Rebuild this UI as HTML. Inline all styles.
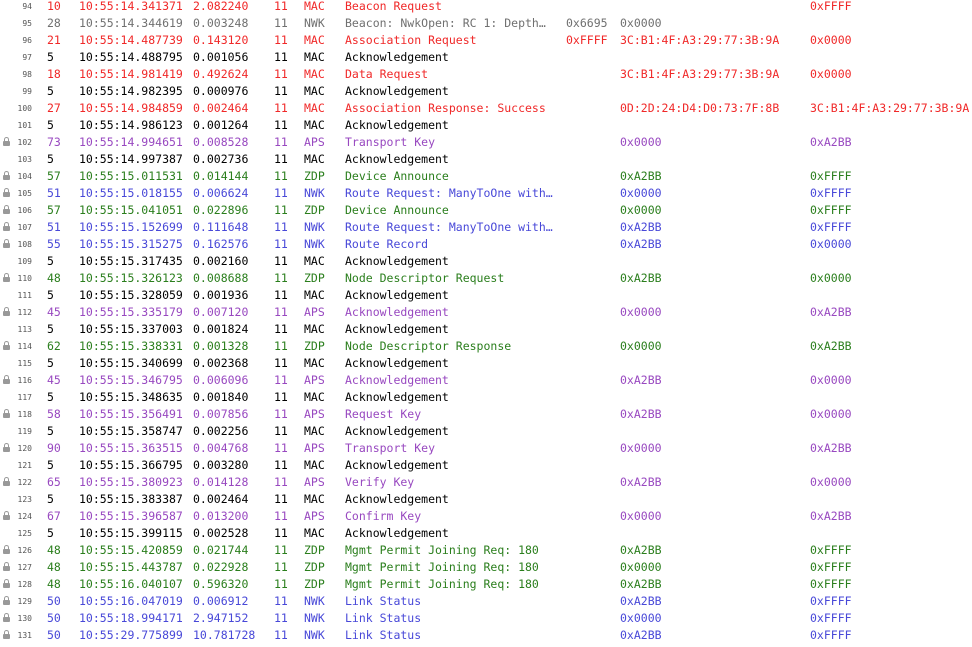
<!DOCTYPE html>
<html><head><meta charset="utf-8"><style>
body{margin:0;background:#fff;width:972px;height:647px;overflow:hidden;font-family:"DejaVu Sans Mono","Liberation Mono",monospace;font-size:11.5px}
#t{position:absolute;top:-2px;left:0}
.r{position:relative;height:17px;line-height:17px;white-space:nowrap;color:#000}
.r span{position:absolute;top:0}
.i{left:0;width:32px;text-align:right;font-size:8px;color:#555}
.n{left:47px}.t{left:79px}.d{left:193px}.c{left:274px}.p{left:304px}.s{left:345px}.a{left:566px}.b{left:620px}.e{left:810px}
.R{color:#f02828}.G{color:#707070}.P{color:#9848c0}.V{color:#2a7e1c}.B{color:#4848d8}
.L::before{content:"";position:absolute;left:3px;top:7px;width:7px;height:5px;background:#999;border-radius:1px}
.L::after{content:"";position:absolute;left:4px;top:3px;width:3px;height:4px;border:1px solid #999;border-bottom:none;border-radius:3px 3px 0 0}
</style></head><body><div id="t">
<div class="r R"><span class="i">94</span><span class="n">10</span><span class="t">10:55:14.341371</span><span class="d">2.082240</span><span class="c">11</span><span class="p">MAC</span><span class="s">Beacon Request</span><span class="e">0xFFFF</span></div>
<div class="r G"><span class="i">95</span><span class="n">28</span><span class="t">10:55:14.344619</span><span class="d">0.003248</span><span class="c">11</span><span class="p">NWK</span><span class="s">Beacon: NwkOpen: RC 1: Depth…</span><span class="a">0x6695</span><span class="b">0x0000</span></div>
<div class="r R"><span class="i">96</span><span class="n">21</span><span class="t">10:55:14.487739</span><span class="d">0.143120</span><span class="c">11</span><span class="p">MAC</span><span class="s">Association Request</span><span class="a">0xFFFF</span><span class="b">3C:B1:4F:A3:29:77:3B:9A</span><span class="e">0x0000</span></div>
<div class="r"><span class="i">97</span><span class="n">5</span><span class="t">10:55:14.488795</span><span class="d">0.001056</span><span class="c">11</span><span class="p">MAC</span><span class="s">Acknowledgement</span></div>
<div class="r R"><span class="i">98</span><span class="n">18</span><span class="t">10:55:14.981419</span><span class="d">0.492624</span><span class="c">11</span><span class="p">MAC</span><span class="s">Data Request</span><span class="b">3C:B1:4F:A3:29:77:3B:9A</span><span class="e">0x0000</span></div>
<div class="r"><span class="i">99</span><span class="n">5</span><span class="t">10:55:14.982395</span><span class="d">0.000976</span><span class="c">11</span><span class="p">MAC</span><span class="s">Acknowledgement</span></div>
<div class="r R"><span class="i">100</span><span class="n">27</span><span class="t">10:55:14.984859</span><span class="d">0.002464</span><span class="c">11</span><span class="p">MAC</span><span class="s">Association Response: Success</span><span class="b">0D:2D:24:D4:D0:73:7F:8B</span><span class="e">3C:B1:4F:A3:29:77:3B:9A</span></div>
<div class="r"><span class="i">101</span><span class="n">5</span><span class="t">10:55:14.986123</span><span class="d">0.001264</span><span class="c">11</span><span class="p">MAC</span><span class="s">Acknowledgement</span></div>
<div class="r P L"><span class="i">102</span><span class="n">73</span><span class="t">10:55:14.994651</span><span class="d">0.008528</span><span class="c">11</span><span class="p">APS</span><span class="s">Transport Key</span><span class="b">0x0000</span><span class="e">0xA2BB</span></div>
<div class="r"><span class="i">103</span><span class="n">5</span><span class="t">10:55:14.997387</span><span class="d">0.002736</span><span class="c">11</span><span class="p">MAC</span><span class="s">Acknowledgement</span></div>
<div class="r V L"><span class="i">104</span><span class="n">57</span><span class="t">10:55:15.011531</span><span class="d">0.014144</span><span class="c">11</span><span class="p">ZDP</span><span class="s">Device Announce</span><span class="b">0xA2BB</span><span class="e">0xFFFF</span></div>
<div class="r B L"><span class="i">105</span><span class="n">51</span><span class="t">10:55:15.018155</span><span class="d">0.006624</span><span class="c">11</span><span class="p">NWK</span><span class="s">Route Request: ManyToOne with…</span><span class="b">0x0000</span><span class="e">0xFFFF</span></div>
<div class="r V L"><span class="i">106</span><span class="n">57</span><span class="t">10:55:15.041051</span><span class="d">0.022896</span><span class="c">11</span><span class="p">ZDP</span><span class="s">Device Announce</span><span class="b">0x0000</span><span class="e">0xFFFF</span></div>
<div class="r B L"><span class="i">107</span><span class="n">51</span><span class="t">10:55:15.152699</span><span class="d">0.111648</span><span class="c">11</span><span class="p">NWK</span><span class="s">Route Request: ManyToOne with…</span><span class="b">0xA2BB</span><span class="e">0xFFFF</span></div>
<div class="r B L"><span class="i">108</span><span class="n">55</span><span class="t">10:55:15.315275</span><span class="d">0.162576</span><span class="c">11</span><span class="p">NWK</span><span class="s">Route Record</span><span class="b">0xA2BB</span><span class="e">0x0000</span></div>
<div class="r"><span class="i">109</span><span class="n">5</span><span class="t">10:55:15.317435</span><span class="d">0.002160</span><span class="c">11</span><span class="p">MAC</span><span class="s">Acknowledgement</span></div>
<div class="r V L"><span class="i">110</span><span class="n">48</span><span class="t">10:55:15.326123</span><span class="d">0.008688</span><span class="c">11</span><span class="p">ZDP</span><span class="s">Node Descriptor Request</span><span class="b">0xA2BB</span><span class="e">0x0000</span></div>
<div class="r"><span class="i">111</span><span class="n">5</span><span class="t">10:55:15.328059</span><span class="d">0.001936</span><span class="c">11</span><span class="p">MAC</span><span class="s">Acknowledgement</span></div>
<div class="r P L"><span class="i">112</span><span class="n">45</span><span class="t">10:55:15.335179</span><span class="d">0.007120</span><span class="c">11</span><span class="p">APS</span><span class="s">Acknowledgement</span><span class="b">0x0000</span><span class="e">0xA2BB</span></div>
<div class="r"><span class="i">113</span><span class="n">5</span><span class="t">10:55:15.337003</span><span class="d">0.001824</span><span class="c">11</span><span class="p">MAC</span><span class="s">Acknowledgement</span></div>
<div class="r V L"><span class="i">114</span><span class="n">62</span><span class="t">10:55:15.338331</span><span class="d">0.001328</span><span class="c">11</span><span class="p">ZDP</span><span class="s">Node Descriptor Response</span><span class="b">0x0000</span><span class="e">0xA2BB</span></div>
<div class="r"><span class="i">115</span><span class="n">5</span><span class="t">10:55:15.340699</span><span class="d">0.002368</span><span class="c">11</span><span class="p">MAC</span><span class="s">Acknowledgement</span></div>
<div class="r P L"><span class="i">116</span><span class="n">45</span><span class="t">10:55:15.346795</span><span class="d">0.006096</span><span class="c">11</span><span class="p">APS</span><span class="s">Acknowledgement</span><span class="b">0xA2BB</span><span class="e">0x0000</span></div>
<div class="r"><span class="i">117</span><span class="n">5</span><span class="t">10:55:15.348635</span><span class="d">0.001840</span><span class="c">11</span><span class="p">MAC</span><span class="s">Acknowledgement</span></div>
<div class="r P L"><span class="i">118</span><span class="n">58</span><span class="t">10:55:15.356491</span><span class="d">0.007856</span><span class="c">11</span><span class="p">APS</span><span class="s">Request Key</span><span class="b">0xA2BB</span><span class="e">0x0000</span></div>
<div class="r"><span class="i">119</span><span class="n">5</span><span class="t">10:55:15.358747</span><span class="d">0.002256</span><span class="c">11</span><span class="p">MAC</span><span class="s">Acknowledgement</span></div>
<div class="r P L"><span class="i">120</span><span class="n">90</span><span class="t">10:55:15.363515</span><span class="d">0.004768</span><span class="c">11</span><span class="p">APS</span><span class="s">Transport Key</span><span class="b">0x0000</span><span class="e">0xA2BB</span></div>
<div class="r"><span class="i">121</span><span class="n">5</span><span class="t">10:55:15.366795</span><span class="d">0.003280</span><span class="c">11</span><span class="p">MAC</span><span class="s">Acknowledgement</span></div>
<div class="r P L"><span class="i">122</span><span class="n">65</span><span class="t">10:55:15.380923</span><span class="d">0.014128</span><span class="c">11</span><span class="p">APS</span><span class="s">Verify Key</span><span class="b">0xA2BB</span><span class="e">0x0000</span></div>
<div class="r"><span class="i">123</span><span class="n">5</span><span class="t">10:55:15.383387</span><span class="d">0.002464</span><span class="c">11</span><span class="p">MAC</span><span class="s">Acknowledgement</span></div>
<div class="r P L"><span class="i">124</span><span class="n">67</span><span class="t">10:55:15.396587</span><span class="d">0.013200</span><span class="c">11</span><span class="p">APS</span><span class="s">Confirm Key</span><span class="b">0x0000</span><span class="e">0xA2BB</span></div>
<div class="r"><span class="i">125</span><span class="n">5</span><span class="t">10:55:15.399115</span><span class="d">0.002528</span><span class="c">11</span><span class="p">MAC</span><span class="s">Acknowledgement</span></div>
<div class="r V L"><span class="i">126</span><span class="n">48</span><span class="t">10:55:15.420859</span><span class="d">0.021744</span><span class="c">11</span><span class="p">ZDP</span><span class="s">Mgmt Permit Joining Req: 180</span><span class="b">0xA2BB</span><span class="e">0xFFFF</span></div>
<div class="r V L"><span class="i">127</span><span class="n">48</span><span class="t">10:55:15.443787</span><span class="d">0.022928</span><span class="c">11</span><span class="p">ZDP</span><span class="s">Mgmt Permit Joining Req: 180</span><span class="b">0x0000</span><span class="e">0xFFFF</span></div>
<div class="r V L"><span class="i">128</span><span class="n">48</span><span class="t">10:55:16.040107</span><span class="d">0.596320</span><span class="c">11</span><span class="p">ZDP</span><span class="s">Mgmt Permit Joining Req: 180</span><span class="b">0xA2BB</span><span class="e">0xFFFF</span></div>
<div class="r B L"><span class="i">129</span><span class="n">50</span><span class="t">10:55:16.047019</span><span class="d">0.006912</span><span class="c">11</span><span class="p">NWK</span><span class="s">Link Status</span><span class="b">0xA2BB</span><span class="e">0xFFFF</span></div>
<div class="r B L"><span class="i">130</span><span class="n">50</span><span class="t">10:55:18.994171</span><span class="d">2.947152</span><span class="c">11</span><span class="p">NWK</span><span class="s">Link Status</span><span class="b">0x0000</span><span class="e">0xFFFF</span></div>
<div class="r B L"><span class="i">131</span><span class="n">50</span><span class="t">10:55:29.775899</span><span class="d">10.781728</span><span class="c">11</span><span class="p">NWK</span><span class="s">Link Status</span><span class="b">0xA2BB</span><span class="e">0xFFFF</span></div>
</div></body></html>
